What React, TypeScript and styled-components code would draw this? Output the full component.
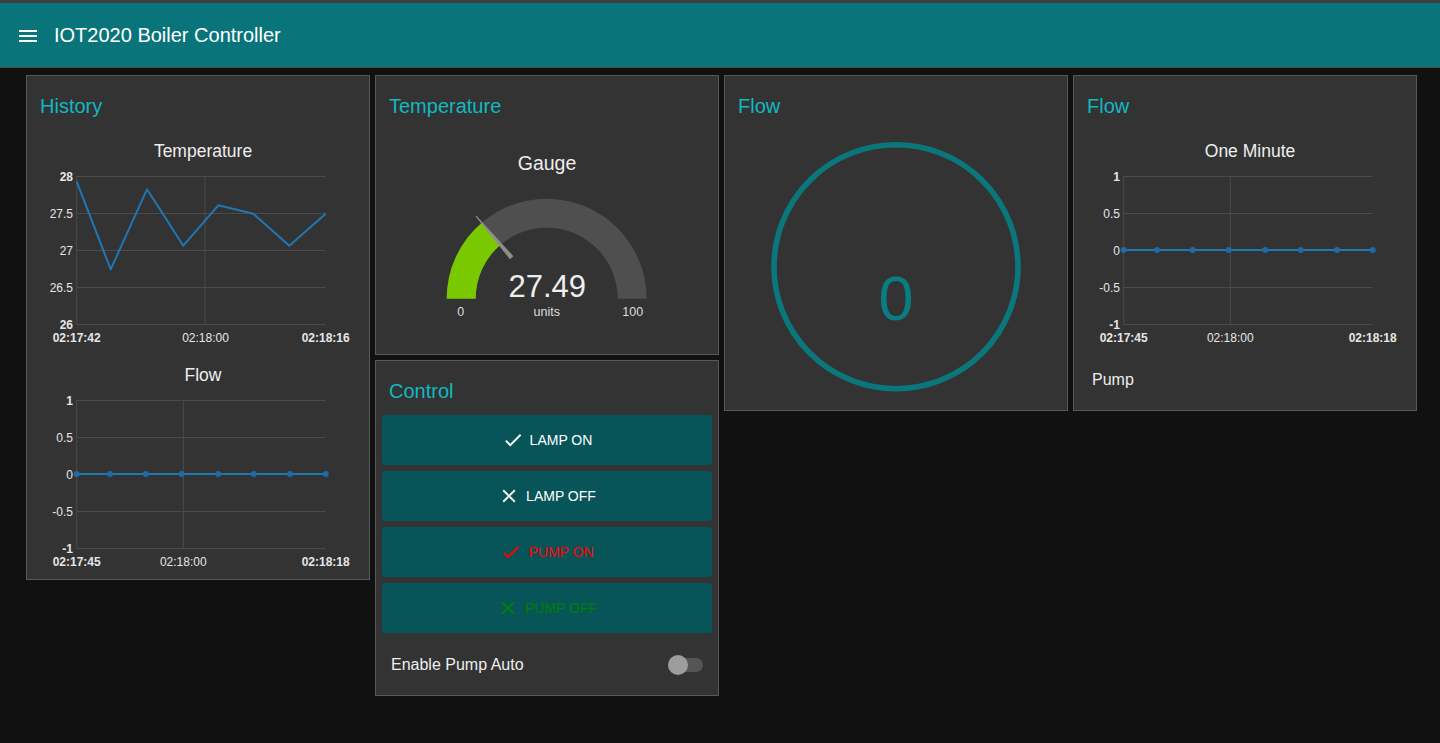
import React from 'react';
import styled, { createGlobalStyle } from 'styled-components';

const GlobalStyle = createGlobalStyle`
  html, body {
    margin: 0;
    padding: 0;
    background: #111111;
  }
  body {
    font-family: "Liberation Sans", Helvetica, Arial, sans-serif;
    color: #eeeeee;
  }
`;

const Page = styled.div`
  min-height: 743px;
  background: #111111;
`;

const Header = styled.header`
  display: flex;
  align-items: center;
  height: 64px;
  padding-left: 16px;
  background: #097479;
  border-top: 3px solid #3e3e3e;
  border-bottom: 1px solid #4c4c4c;
`;

const MenuSvg = styled.svg`
  width: 24px;
  height: 24px;
  fill: #ffffff;
  flex: none;
  margin-top: 1px;
`;

const HeaderTitle = styled.h1`
  margin: 0 0 0 14px;
  font-size: 20px;
  font-weight: 400;
  color: #ffffff;
`;

const Board = styled.main`
  display: flex;
  align-items: flex-start;
  gap: 5px;
  padding: 7px 0 0 26px;
`;

const Column = styled.div`
  display: flex;
  flex-direction: column;
  gap: 5px;
`;

const Card = styled.section<{ $padBottom?: number }>`
  width: 344px;
  box-sizing: border-box;
  background: #333333;
  border: 1px solid #575757;
  padding-bottom: ${(p) => p.$padBottom ?? 0}px;
`;

const CardTitle = styled.h2`
  margin: 0;
  padding: 20px 13px 14px;
  font-size: 20px;
  line-height: 20px;
  font-weight: 400;
  color: #10b9c2;
`;

const Figure = styled.svg<{ $h: number; $mt?: number }>`
  display: block;
  width: 342px;
  height: ${(p) => p.$h}px;
  margin-top: ${(p) => p.$mt ?? 0}px;
  font-family: "Liberation Sans", Helvetica, Arial, sans-serif;
`;

const ButtonStack = styled.div`
  display: flex;
  flex-direction: column;
  gap: 6px;
  padding: 0 6px;
`;

const ActionButton = styled.button<{ $color: string }>`
  display: flex;
  align-items: center;
  justify-content: center;
  gap: 6px;
  height: 50px;
  border: none;
  border-radius: 2px;
  background: #075559;
  color: ${(p) => p.$color};
  font-family: "Liberation Sans", Helvetica, Arial, sans-serif;
  font-size: 14px;
  text-transform: uppercase;
  cursor: pointer;
  svg {
    width: 22px;
    height: 22px;
    fill: ${(p) => p.$color};
  }
`;

const ToggleRow = styled.div`
  display: flex;
  align-items: center;
  justify-content: space-between;
  height: 50px;
  margin: 6px 0;
  padding: 1px 15px 0 15px;
  box-sizing: border-box;
  font-size: 16px;
`;

const SwitchTrack = styled.div`
  position: relative;
  width: 35px;
  height: 14px;
  border-radius: 7px;
  background: #555555;
`;

const SwitchThumb = styled.div`
  position: absolute;
  top: -3px;
  left: 0;
  width: 20px;
  height: 20px;
  border-radius: 50%;
  background: #9d9d9d;
`;

const TextRow = styled.div`
  display: flex;
  align-items: center;
  height: 60px;
  padding-left: 18px;
  font-size: 16px;
  color: #eeeeee;
`;

type Tick = { y: number; label: string; bold?: boolean };
type XLabel = { x: number; label: string; bold?: boolean };

interface ChartProps {
  title: string;
  yTicks: Tick[];
  xLabels: XLabel[];
  vline: number;
  points: [number, number][];
  dots?: boolean;
  mt?: number;
}

const PL = 49.7;
const PR = 298.7;
const PT = 46;
const PB = 194;

const LineChart: React.FC<ChartProps> = ({ title, yTicks, xLabels, vline, points, dots, mt }) => (
  <Figure $h={220} $mt={mt} viewBox="0 0 342 220">
    <text x={176} y={27} fill="#eeeeee" fontSize={17.5} textAnchor="middle">
      {title}
    </text>
    {yTicks.map((t) => (
      <line key={`g${t.label}`} x1={PL} x2={PR} y1={t.y + 0.5} y2={t.y + 0.5} stroke="#4b4b4b" strokeWidth={1.2} />
    ))}
    <line x1={PL} x2={PL} y1={PT} y2={PB} stroke="#4b4b4b" strokeWidth={1} />
    <line x1={vline} x2={vline} y1={PT} y2={PB} stroke="#4b4b4b" strokeWidth={1} />
    {yTicks.map((t) => (
      <text
        key={`l${t.label}`}
        x={46}
        y={t.y + 4.5}
        fill="#e6e6e6"
        fontSize={12}
        fontWeight={t.bold ? 700 : 400}
        textAnchor="end"
      >
        {t.label}
      </text>
    ))}
    {xLabels.map((l) => (
      <text
        key={`x${l.label}`}
        x={l.x}
        y={211.7}
        fill="#e6e6e6"
        fontSize={12}
        fontWeight={l.bold ? 700 : 400}
        textAnchor="middle"
      >
        {l.label}
      </text>
    ))}
    <polyline
      points={points.map((p) => p.join(',')).join(' ')}
      fill="none"
      stroke="#1f77b4"
      strokeWidth={2}
      strokeLinejoin="round"
    />
    {dots && points.map((p, i) => <circle key={i} cx={p[0]} cy={p[1]} r={3} fill="#1d6ca5" />)}
  </Figure>
);

const flowTicks: Tick[] = [
  { y: 46, label: '1', bold: true },
  { y: 83, label: '0.5' },
  { y: 120, label: '0' },
  { y: 157, label: '-0.5' },
  { y: 194, label: '-1', bold: true },
];

const tempTicks: Tick[] = [
  { y: 46, label: '28', bold: true },
  { y: 83, label: '27.5' },
  { y: 120, label: '27' },
  { y: 157, label: '26.5' },
  { y: 194, label: '26', bold: true },
];

const tempPoints: [number, number][] = [
  [49.7, 51.7],
  [83.7, 139.3],
  [120, 59.3],
  [156.3, 115.7],
  [191.3, 75.3],
  [226.3, 83.7],
  [262.3, 115.7],
  [298.7, 83.7],
];

const flowPoints: [number, number][] = [49.7, 83, 118.7, 154.7, 191.3, 226.7, 263, 298.7].map(
  (x) => [x, 120] as [number, number]
);

const flowXLabels: XLabel[] = [
  { x: 49.7, label: '02:17:45', bold: true },
  { x: 156.3, label: '02:18:00' },
  { x: 298.7, label: '02:18:18', bold: true },
];

const Gauge: React.FC<{ value: number; min: number; max: number }> = ({ value, min, max }) => {
  const cx = 170.7;
  const cy = 168.7;
  const ro = 100;
  const ri = 71;
  const f = (value - min) / (max - min);
  const th = f * Math.PI;
  const ox = cx - ro * Math.cos(th);
  const oy = cy - ro * Math.sin(th);
  const ix = cx - ri * Math.cos(th);
  const iy = cy - ri * Math.sin(th);
  const ux = -Math.cos(th);
  const uy = -Math.sin(th);
  const nx = Math.sin(th);
  const ny = -Math.cos(th);
  const tip = [cx + ux * 109, cy + uy * 109];
  const base = [cx + ux * 54, cy + uy * 54];
  const needle = [
    [tip[0] + nx * 0.5, tip[1] + ny * 0.5],
    [base[0] + nx * 2.3, base[1] + ny * 2.3],
    [base[0] - nx * 2.3, base[1] - ny * 2.3],
    [tip[0] - nx * 0.5, tip[1] - ny * 0.5],
  ]
    .map((p) => p.map((v) => v.toFixed(2)).join(','))
    .join(' ');
  return (
    <Figure $h={224} viewBox="0 0 342 224">
      <text x={171} y={40} fill="#eeeeee" fontSize={19.5} textAnchor="middle">
        Gauge
      </text>
      <path
        d={`M${cx - ro},${cy} A${ro},${ro} 0 0 1 ${cx + ro},${cy} L${cx + ri},${cy} A${ri},${ri} 0 0 0 ${cx - ri},${cy} Z`}
        fill="#4f4f4f"
      />
      <path
        d={`M${cx - ro},${cy} A${ro},${ro} 0 0 1 ${ox},${oy} L${ix},${iy} A${ri},${ri} 0 0 0 ${cx - ri},${cy} Z`}
        fill="#79c800"
      />
      <polygon points={needle} fill="#8e8e8e" />
      <text x={cx + 0.5} y={167} fill="#eeeeee" fontSize={31} textAnchor="middle">
        {value.toFixed(2)}
      </text>
      <text x={cx - 86} y={185.7} fill="#dddddd" fontSize={12.5} textAnchor="middle">
        {min}
      </text>
      <text x={cx} y={185.7} fill="#dddddd" fontSize={12.5} textAnchor="middle">
        units
      </text>
      <text x={cx + 86} y={185.7} fill="#dddddd" fontSize={12.5} textAnchor="middle">
        {max}
      </text>
    </Figure>
  );
};

const RingValue: React.FC<{ value: string }> = ({ value }) => (
  <Figure $h={280} viewBox="0 0 342 280">
    <circle cx={171} cy={136.7} r={122} fill="none" stroke="#0a777c" strokeWidth={5.6} />
    <text x={171} y={190} fill="#0a7d83" fontSize={63} textAnchor="middle">
      {value}
    </text>
  </Figure>
);

const CheckIcon = () => (
  <svg viewBox="0 0 24 24">
    <path d="M9 16.17L4.83 12l-1.42 1.41L9 19 21 7l-1.41-1.41z" />
  </svg>
);

const CloseIcon = () => (
  <svg viewBox="0 0 24 24">
    <path d="M19 6.41L17.59 5 12 10.59 6.41 5 5 6.41 10.59 12 5 17.59 6.41 19 12 13.41 17.59 19 19 17.59 13.41 12z" />
  </svg>
);

const buttons = [
  { label: 'Lamp On', color: '#ffffff', icon: <CheckIcon /> },
  { label: 'Lamp Off', color: '#ffffff', icon: <CloseIcon /> },
  { label: 'Pump On', color: '#ff0000', icon: <CheckIcon /> },
  { label: 'Pump Off', color: '#008000', icon: <CloseIcon /> },
];

export default function App() {
  return (
    <Page>
      <GlobalStyle />
      <Header>
        <MenuSvg viewBox="0 0 24 24">
          <path d="M3 18h18v-2H3v2zm0-5h18v-2H3v2zm0-7v2h18V6H3z" />
        </MenuSvg>
        <HeaderTitle>IOT2020 Boiler Controller</HeaderTitle>
      </Header>
      <Board>
        <Card $padBottom={5}>
          <CardTitle>History</CardTitle>
          <LineChart
            title="Temperature"
            yTicks={tempTicks}
            vline={178}
            points={tempPoints}
            xLabels={[
              { x: 49.7, label: '02:17:42', bold: true },
              { x: 178.5, label: '02:18:00' },
              { x: 298.7, label: '02:18:16', bold: true },
            ]}
          />
          <LineChart
            title="Flow"
            yTicks={flowTicks}
            vline={156.3}
            points={flowPoints}
            xLabels={flowXLabels}
            dots
            mt={4}
          />
        </Card>
        <Column>
          <Card>
            <CardTitle>Temperature</CardTitle>
            <Gauge value={27.49} min={0} max={100} />
          </Card>
          <Card>
            <CardTitle>Control</CardTitle>
            <ButtonStack>
              {buttons.map((b) => (
                <ActionButton key={b.label} $color={b.color}>
                  {b.icon}
                  {b.label}
                </ActionButton>
              ))}
            </ButtonStack>
            <ToggleRow>
              <span>Enable Pump Auto</span>
              <SwitchTrack>
                <SwitchThumb />
              </SwitchTrack>
            </ToggleRow>
          </Card>
        </Column>
        <Card>
          <CardTitle>Flow</CardTitle>
          <RingValue value="0" />
        </Card>
        <Card>
          <CardTitle>Flow</CardTitle>
          <LineChart
            title="One Minute"
            yTicks={flowTicks}
            vline={156.3}
            points={flowPoints}
            xLabels={flowXLabels}
            dots
          />
          <TextRow>Pump</TextRow>
        </Card>
      </Board>
    </Page>
  );
}
